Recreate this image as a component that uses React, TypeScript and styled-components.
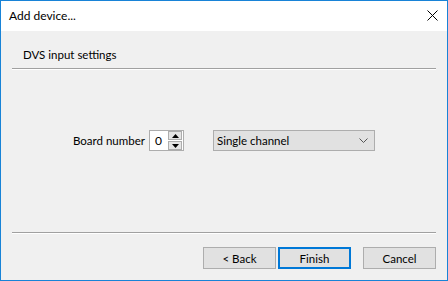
import styled, { createGlobalStyle } from "styled-components";

const GlobalStyle = createGlobalStyle`
  html, body {
    margin: 0;
    padding: 0;
    background: #ffffff;
  }
  body {
    font-family: Lato, "Liberation Sans", Arial, sans-serif;
    font-size: 11.5px;
    color: #000000;
  }
`;

const Window = styled.div`
  box-sizing: border-box;
  width: 448px;
  height: 281px;
  border: 1px solid #1883d7;
  display: flex;
  flex-direction: column;
  background: #f0f0f0;
`;

const TitleBar = styled.div`
  height: 30px;
  flex: none;
  background: #ffffff;
  display: flex;
  align-items: center;
  justify-content: space-between;
  padding: 0 9px 0 8px;
`;

const Title = styled.span`
  font-size: 12px;
  line-height: 16px;
  margin-top: -1px;
`;

const CloseButton = styled.div`
  width: 11px;
  height: 11px;
  display: flex;
  margin-top: -1px;
`;

const Body = styled.div`
  flex: 1;
  display: flex;
  flex-direction: column;
  padding: 0 11px;
`;

const SectionTitle = styled.div`
  padding: 16px 0 0 11px;
  line-height: 16px;
  height: 16px;
`;

const Separator = styled.div<{ $top: number }>`
  margin-top: ${({ $top }) => $top}px;
  height: 1px;
  background: #a0a0a0;
  border-bottom: 1px solid #ffffff;
`;

const Content = styled.div`
  height: 162px;
  display: flex;
  align-items: flex-start;
  padding: 60px 0 0 61px;
  box-sizing: border-box;
`;

const Row = styled.div`
  display: flex;
  align-items: center;
`;

const Label = styled.span`
  width: 76px;
  line-height: 21px;
`;

const Spin = styled.div`
  display: flex;
  height: 21px;
  box-sizing: border-box;
  border: 1px solid #adadad;
  background: #ffffff;
  width: 35px;
`;

const SpinValue = styled.div`
  width: 17px;
  text-align: center;
  line-height: 19px;
  font-size: 12px;
`;

const SpinButtons = styled.div`
  display: flex;
  flex-direction: column;
  gap: 1px;
  padding: 0 0 0 1px;
`;

const SpinButton = styled.div`
  width: 14px;
  height: 9px;
  box-sizing: border-box;
  border: 1px solid #adadad;
  background: #e5e5e5;
  display: flex;
  align-items: center;
  justify-content: center;
`;

const Combo = styled.div`
  margin-left: 29px;
  width: 162px;
  height: 21px;
  box-sizing: border-box;
  border: 1px solid #adadad;
  background: #e1e1e1;
  display: flex;
  align-items: center;
  justify-content: space-between;
  padding: 0 6px 0 3px;
`;

const Footer = styled.div`
  display: flex;
  justify-content: flex-end;
  padding-top: 13px;
`;

const Button = styled.div<{ $default?: boolean; $gap: number }>`
  width: 73px;
  height: 22px;
  box-sizing: border-box;
  margin-left: ${({ $gap }) => $gap}px;
  border: ${({ $default }) => ($default ? "2px solid #0078d7" : "1px solid #adadad")};
  background: #e1e1e1;
  display: flex;
  align-items: center;
  justify-content: center;
`;

export default function App() {
  return (
    <>
      <GlobalStyle />
      <Window>
        <TitleBar>
          <Title>Add device...</Title>
          <CloseButton>
            <svg width="11" height="11" viewBox="0 0 11 11">
              <path d="M0.5 0.5 L10.5 10.5 M10.5 0.5 L0.5 10.5" stroke="#000" strokeWidth="1" />
            </svg>
          </CloseButton>
        </TitleBar>
        <Body>
          <SectionTitle>DVS input settings</SectionTitle>
          <Separator $top={5} />
          <Content>
            <Row>
              <Label>Board number</Label>
              <Spin>
                <SpinValue>0</SpinValue>
                <SpinButtons>
                  <SpinButton>
                    <svg width="7" height="4" viewBox="0 0 7 4">
                      <path d="M3.5 0 L7 4 L0 4 Z" fill="#000" />
                    </svg>
                  </SpinButton>
                  <SpinButton>
                    <svg width="7" height="4" viewBox="0 0 7 4">
                      <path d="M0 0 L7 0 L3.5 4 Z" fill="#000" />
                    </svg>
                  </SpinButton>
                </SpinButtons>
              </Spin>
              <Combo>
                <span>Single channel</span>
                <svg width="9" height="5" viewBox="0 0 9 5">
                  <path d="M0.5 0.5 L4.5 4.5 L8.5 0.5" stroke="#555" fill="none" strokeWidth="1" />
                </svg>
              </Combo>
            </Row>
          </Content>
          <Separator $top={0} />
          <Footer>
            <Button $gap={0}>&lt; Back</Button>
            <Button $gap={2} $default>
              Finish
            </Button>
            <Button $gap={12}>Cancel</Button>
          </Footer>
        </Body>
      </Window>
    </>
  );
}
